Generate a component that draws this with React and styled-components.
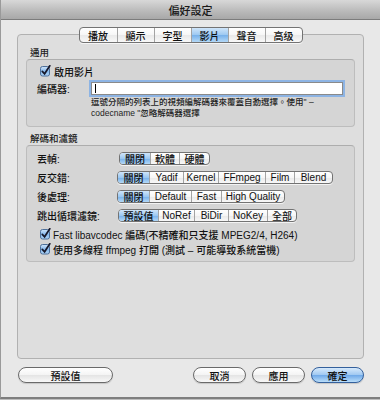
import React from 'react';
import styled, { createGlobalStyle } from 'styled-components';

const Global = createGlobalStyle`
  html, body { margin: 0; padding: 0; background: #bdbdbd; }
  body {
    font-family: "Liberation Sans", "Noto Sans CJK TC", sans-serif;
    font-size: 10px;
    color: #111;
  }
  * { box-sizing: border-box; }
`;

const Window = styled.div`
  width: 380px;
  height: 399px;
  display: flex;
  flex-direction: column;
  background: #e8e8e8;
  border-left: 1px solid #9a9a9a;
  border-bottom: 2px solid #7e7e7e;
`;

const TitleBar = styled.div`
  height: 20px;
  flex: none;
  display: flex;
  align-items: center;
  justify-content: center;
  background: linear-gradient(#d8d8d8, #b9b9b9 60%, #a8a8a8);
  border-bottom: 1px solid #7c7c7c;
  font-size: 11px;
  font-weight: 500;
  color: #1a1a1a;
`;

const Body = styled.div`
  flex: 1;
  display: flex;
  flex-direction: column;
  padding: 7px 16px 14px 16px;
`;

const TabRow = styled.div`
  position: relative;
  z-index: 1;
  display: flex;
  justify-content: center;
  margin-bottom: -9px;
`;

const Segmented = styled.div`
  display: inline-flex;
  height: ${p => p.$h}px;
  border: 1px solid #737373;
  border-radius: 4px;
  overflow: hidden;
  background: linear-gradient(#ffffff, #f6f6f6 50%, #e9e9e9 51%, #f8f8f8);
  box-shadow: 0 1px 0 rgba(255, 255, 255, 0.7);
  margin-left: ${p => p.$shift || 0}px;
`;

const Segment = styled.div`
  width: ${p => p.$w}px;
  display: flex;
  align-items: center;
  justify-content: center;
  border-left: 1px solid #a3a3a3;
  font-weight: 500;
  white-space: nowrap;
  color: #111;
  &:first-child { border-left: none; }
  background: ${p => (p.$on
    ? 'linear-gradient(#cfe5fa, #9cc8f1 50%, #76b0ea 51%, #b3d8f7)'
    : 'transparent')};
`;

const Panel = styled.div`
  flex: 1;
  display: flex;
  flex-direction: column;
  padding: 12px 8px 0 8px;
  background: #dedede;
  border: 1px solid #b1b1b1;
  border-radius: 4px;
`;

const SectionLabel = styled.div`
  height: 11px;
  line-height: 11px;
  padding-left: 4px;
  font-size: 9.5px;
  font-weight: 500;
  color: #222;
  margin-top: ${p => p.$top || 0}px;
`;

const Group = styled.div`
  margin-top: ${p => p.$top || 0}px;
  display: flex;
  flex-direction: column;
  padding: ${p => p.$pad};
  background: #d5d5d5;
  border: 1px solid #bdbdbd;
  border-top-color: #adadad;
  border-radius: 4px;
`;

const CheckRow = styled.label`
  display: flex;
  align-items: center;
  gap: ${p => p.$gap}px;
  height: 12px;
  margin-left: 3px;
  margin-top: ${p => p.$top || 0}px;
  font-weight: 500;
  white-space: nowrap;
`;

const FieldRow = styled.div`
  display: flex;
  align-items: center;
  margin-top: 5px;
  height: 13px;
`;

const FieldLabel = styled.div`
  width: ${p => p.$w}px;
  flex: none;
  font-weight: 500;
  white-space: nowrap;
`;

const TextInput = styled.div`
  width: 252px;
  height: 13px;
  background: #fff;
  border: 1px solid #8a8a8a;
  box-shadow: 0 0 0 2px #8db4e4;
  display: flex;
  align-items: center;
  padding-left: 3px;
`;

const Caret = styled.span`
  width: 1px;
  height: 9px;
  background: #000;
`;

const Help = styled.div`
  margin: 2px 0 0 54px;
  font-size: 8.5px;
  line-height: 11px;
  color: #1e1e1e;
  font-weight: 500;
`;

const OptionRow = styled.div`
  display: flex;
  align-items: center;
  height: 13px;
  margin-top: 6px;
`;

const ButtonBar = styled.div`
  display: flex;
  align-items: center;
  margin-top: 8px;
  height: 16px;
  padding-left: 1px;
`;

const Spacer = styled.div`
  flex: 1;
`;

const PushButton = styled.div`
  width: ${p => p.$w}px;
  height: 16px;
  margin-left: ${p => p.$ml || 0}px;
  display: flex;
  align-items: center;
  justify-content: center;
  border-radius: 8px;
  border: 1px solid ${p => (p.$primary ? '#34609c' : '#6a6a6a')};
  background: ${p => (p.$primary
    ? 'linear-gradient(#d6e9fb, #9fc8f1 50%, #6ea8e8 51%, #b9ddf9)'
    : 'linear-gradient(#ffffff, #f4f4f4 50%, #e4e4e4 51%, #f8f8f8)')};
  box-shadow: 0 1px 1px rgba(0, 0, 0, 0.15);
  font-weight: 500;
`;

const CheckBox = () => (
  <svg width="11" height="12" viewBox="0 0 11 12">
    <defs>
      <linearGradient id="cbg" x1="0" y1="0" x2="0" y2="1">
        <stop offset="0" stopColor="#d3e7fb" />
        <stop offset="0.5" stopColor="#86b8ec" />
        <stop offset="1" stopColor="#afd5f7" />
      </linearGradient>
    </defs>
    <rect x="0.5" y="1.5" width="9" height="9.5" rx="2" fill="url(#cbg)" stroke="#4d6f99" />
    <path d="M2.3 6.3 L4.6 8.8 L9.8 0.8" stroke="#17182a" strokeWidth="1.7" fill="none" strokeLinecap="round" />
  </svg>
);

const tabs = ['播放', '顯示', '字型', '影片', '聲音', '高级'];

const options = [
  { label: '丟幀:', shift: 2, items: [['關閉', 30], ['軟體', 29], ['硬體', 30]] },
  { label: '反交錯:', items: [['關閉', 31], ['Yadif', 34], ['Kernel', 35], ['FFmpeg', 47], ['Film', 29], ['Blend', 38]] },
  { label: '後處理:', items: [['關閉', 31], ['Default', 42], ['Fast', 30], ['High Quality', 63]] },
  { label: '跳出循環濾鏡:', shift: 1, items: [['預設值', 39], ['NoRef', 36], ['BiDir', 34], ['NoKey', 39], ['全部', 29]] },
];

export default function App() {
  return (
    <>
      <Global />
      <Window>
        <TitleBar>偏好設定</TitleBar>
        <Body>
          <TabRow>
            <Segmented $h={16}>
              {tabs.map((t, i) => (
                <Segment key={t} $w={37} $on={i === 3}>{t}</Segment>
              ))}
            </Segmented>
          </TabRow>
          <Panel>
            <SectionLabel>通用</SectionLabel>
            <Group $top={1} $pad="5px 10px 7px 10px">
              <CheckRow $gap={3}><CheckBox />啟用影片</CheckRow>
              <FieldRow>
                <FieldLabel $w={54}>編碼器:</FieldLabel>
                <TextInput><Caret /></TextInput>
              </FieldRow>
              <Help>
                逗號分隔的列表上的視頻編解碼器來覆蓋自動選擇。使用" –<br />
                codecname "忽略解碼器選擇
              </Help>
            </Group>
            <SectionLabel $top={6}>解碼和濾鏡</SectionLabel>
            <Group $top={1} $pad="0 10px 6px 10px">
              {options.map(o => (
                <OptionRow key={o.label}>
                  <FieldLabel $w={80}>{o.label}</FieldLabel>
                  <Segmented $h={13} $shift={o.shift}>
                    {o.items.map(([t, w], i) => (
                      <Segment key={t} $w={w} $on={i === 0}>{t}</Segment>
                    ))}
                  </Segmented>
                </OptionRow>
              ))}
              <CheckRow $gap={2} $top={6}><CheckBox />Fast libavcodec 編碼(不精確和只支援 MPEG2/4, H264)</CheckRow>
              <CheckRow $gap={2} $top={3}><CheckBox />使用多線程 ffmpeg 打開 (測試 – 可能導致系統當機)</CheckRow>
            </Group>
          </Panel>
          <ButtonBar>
            <PushButton $w={95}>預設值</PushButton>
            <Spacer />
            <PushButton $w={53}>取消</PushButton>
            <PushButton $w={53} $ml={6}>應用</PushButton>
            <PushButton $w={53} $ml={6} $primary>確定</PushButton>
          </ButtonBar>
        </Body>
      </Window>
    </>
  );
}
